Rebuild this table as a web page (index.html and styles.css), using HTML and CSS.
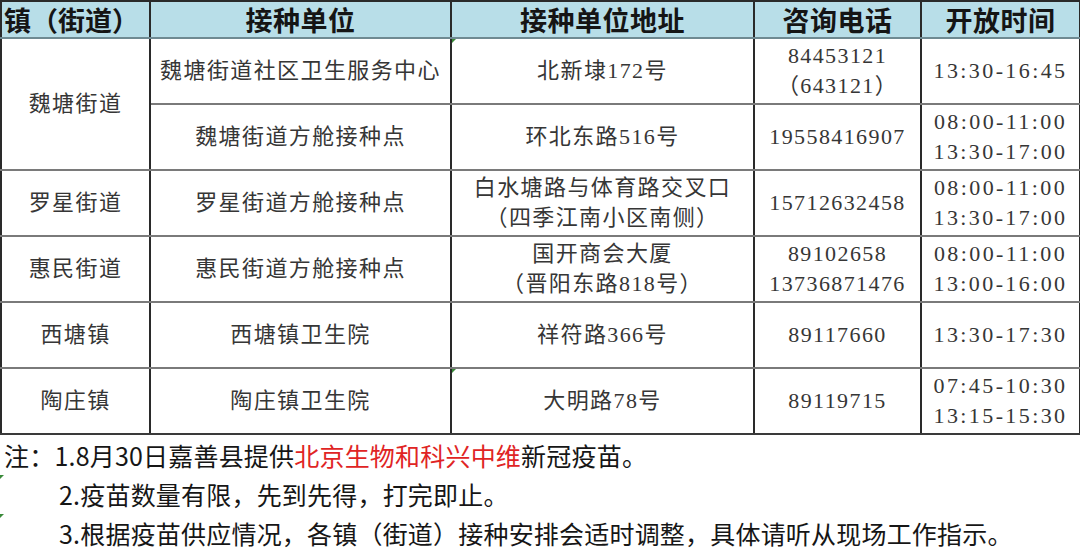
FILE: index.html
```html
<!DOCTYPE html>
<html lang="zh">
<head>
<meta charset="utf-8">
<link rel="stylesheet" href="styles.css">
</head>
<body>
<table class="sched">
  <colgroup>
    <col class="c1"><col class="c2"><col class="c3"><col class="c4"><col class="c5">
  </colgroup>
  <thead>
    <tr class="head">
      <th class="left">镇（街道）</th>
      <th>接种单位</th>
      <th>接种单位地址</th>
      <th>咨询电话</th>
      <th>开放时间</th>
    </tr>
  </thead>
  <tbody>
    <tr>
      <td rowspan="2">魏塘街道</td>
      <td>魏塘街道社区卫生服务中心</td>
      <td class="mark">北新埭172号</td>
      <td>84453121<br>（643121）</td>
      <td class="time">13:30-16:45</td>
    </tr>
    <tr>
      <td>魏塘街道方舱接种点</td>
      <td>环北东路516号</td>
      <td>19558416907</td>
      <td class="time">08:00-11:00<br>13:30-17:00</td>
    </tr>
    <tr>
      <td>罗星街道</td>
      <td>罗星街道方舱接种点</td>
      <td>白水塘路与体育路交叉口<br>（四季江南小区南侧）</td>
      <td>15712632458</td>
      <td class="time">08:00-11:00<br>13:30-17:00</td>
    </tr>
    <tr>
      <td>惠民街道</td>
      <td>惠民街道方舱接种点</td>
      <td>国开商会大厦<br>（晋阳东路818号）</td>
      <td>89102658<br>13736871476</td>
      <td class="time">08:00-11:00<br>13:00-16:00</td>
    </tr>
    <tr>
      <td>西塘镇</td>
      <td>西塘镇卫生院</td>
      <td>祥符路366号</td>
      <td>89117660</td>
      <td class="time">13:30-17:30</td>
    </tr>
    <tr>
      <td>陶庄镇</td>
      <td>陶庄镇卫生院</td>
      <td class="mark">大明路78号</td>
      <td>89119715</td>
      <td class="time">07:45-10:30<br>13:15-15:30</td>
    </tr>
  </tbody>
</table>
<div class="notes">
  <p class="note first">注：1.8月30日嘉善县提供<span class="red">北京生物和科兴中维</span>新冠疫苗。</p>
  <p class="note mark">2.疫苗数量有限，先到先得，打完即止。</p>
  <p class="note mark">3.根据疫苗供应情况，各镇（街道）接种安排会适时调整，具体请听从现场工作指示。</p>
</div>
</body>
</html>
```
FILE: styles.css
```css
html, body {
  margin: 0;
  padding: 0;
  background: #ffffff;
}

body {
  width: 1080px;
  height: 557px;
  overflow: hidden;
}

.sched {
  border-collapse: collapse;
  table-layout: fixed;
  width: 1079px;
  margin: 0;
}

.c1 { width: 149px; }
.c2 { width: 301px; }
.c3 { width: 303px; }
.c4 { width: 167px; }
.c5 { width: 159px; }

.sched th,
.sched td {
  border-left: 2px solid #2a2a2a;
  border-right: 2px solid #2a2a2a;
  border-top: 2px solid #7a7a7a;
  border-bottom: 2px solid #7a7a7a;
  padding: 0;
  text-align: center;
  vertical-align: middle;
}

.head th {
  background: #b8dee8;
  height: 35px;
  border-top: 2px solid #2a2a2a;
  border-bottom: 2px solid #6f8a92;
  font-family: "Noto Sans CJK SC", "Noto Sans", sans-serif;
  font-weight: 700;
  font-size: 27px;
  line-height: 35px;
  color: #151515;
  letter-spacing: 0.5px;
}

.head th.left {
  text-align: left;
  padding-left: 2px;
  letter-spacing: 0;
}

.sched td {
  height: 64px;
  font-family: "Liberation Serif", "Noto Sans CJK SC", serif;
  font-size: 22px;
  line-height: 30px;
  letter-spacing: 1.4px;
  color: #363636;
}

.sched tbody tr:last-child td {
  border-bottom: 2px solid #3a3a3a;
}

.sched td.time {
  letter-spacing: 2.4px;
}

.sched td.mark {
  position: relative;
}

.sched td.mark::before {
  content: "";
  position: absolute;
  left: 0;
  top: 0;
  border-top: 4px solid #3a8a3a;
  border-right: 4px solid transparent;
}

.notes {
  padding-top: 1px;
  font-family: "Noto Sans CJK SC", "Noto Sans", sans-serif;
  font-size: 25px;
  line-height: 39px;
  color: #161616;
}

.note {
  margin: 0;
  padding-left: 59px;
  white-space: nowrap;
  letter-spacing: 0.2px;
}

.note.first {
  padding-left: 4px;
}

.note.mark {
  position: relative;
}

.note.mark::before {
  content: "";
  position: absolute;
  left: 0;
  top: 0;
  border-top: 4px solid #3a8a3a;
  border-right: 4px solid transparent;
}

.red {
  color: #e02424;
}
```
